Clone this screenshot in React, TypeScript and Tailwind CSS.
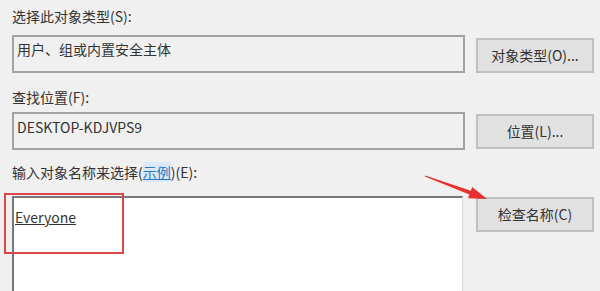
import React from "react";

const font = "font-['Noto_Sans_CJK_SC','Noto_Sans',sans-serif]";

function Btn({ children, className = "" }: { children: React.ReactNode; className?: string }) {
  return (
    <div
      className={`w-[118px] h-[35px] flex items-center justify-center bg-[#e1e1e1] border-2 border-[#c0c0c0] text-[14px] text-[#333] ${className}`}
    >
      {children}
    </div>
  );
}

export default function App() {
  return (
    <div className={`relative w-[600px] h-[291px] overflow-hidden bg-[#f0f0f0] ${font} text-[#333]`}>
      <div className="flex flex-col pl-[12px] pt-[6px]">
        <div className="h-[20px] leading-[20px] text-[14px]">选择此对象类型(S):</div>
        <div className="flex gap-[11px] mt-[9px]">
          <div className="w-[453px] h-[38px] border-2 border-[#a2a2a2] bg-[#f0f0f0] pl-[3px] pt-[2px] text-[14px] leading-[20px]">
            用户、组或内置安全主体
          </div>
          <Btn className="mt-[3px]">对象类型(O)...</Btn>
        </div>

        <div className="h-[20px] leading-[20px] text-[14px] mt-[14px]">查找位置(F):</div>
        <div className="flex gap-[11px] mt-[5px]">
          <div className="w-[453px] h-[38px] border-2 border-[#a2a2a2] bg-[#f0f0f0] pl-[3px] pt-[3px] text-[14px] leading-[20px]">
            DESKTOP-KDJVPS9
          </div>
          <Btn className="mt-[2px]">位置(L)...</Btn>
        </div>

        <div className="h-[20px] leading-[20px] text-[14px] mt-[12px]">
          输入对象名称来选择(<span className="text-[#2a76c6] bg-[#d9e9f7] underline">示例</span>)(E):
        </div>
        <div className="flex gap-[13px] mt-[14px]">
          <div className="w-[451px] h-[110px] border-t-2 border-l-2 border-[#777] border-r border-r-[#d8d8d8] bg-white pl-[1px] pt-[10px] text-[14px] leading-[18px]">
            <span className="underline text-[#333]">Everyone</span>
          </div>
          <Btn className="mt-[1px]">检查名称(C)</Btn>
        </div>
      </div>

      <div className="absolute left-[4px] top-[193px] w-[120px] h-[61px] border-2 border-[#d9474a]" />

      <svg className="absolute left-0 top-0" width="600" height="291" viewBox="0 0 600 291">
        <polygon
          points="425.2,175.5 470.8,190.8 472.2,187.1 487,199 468.0,198.3 469.4,194.6 424.8,176.5"
          fill="#e6312f"
        />
      </svg>
    </div>
  );
}
